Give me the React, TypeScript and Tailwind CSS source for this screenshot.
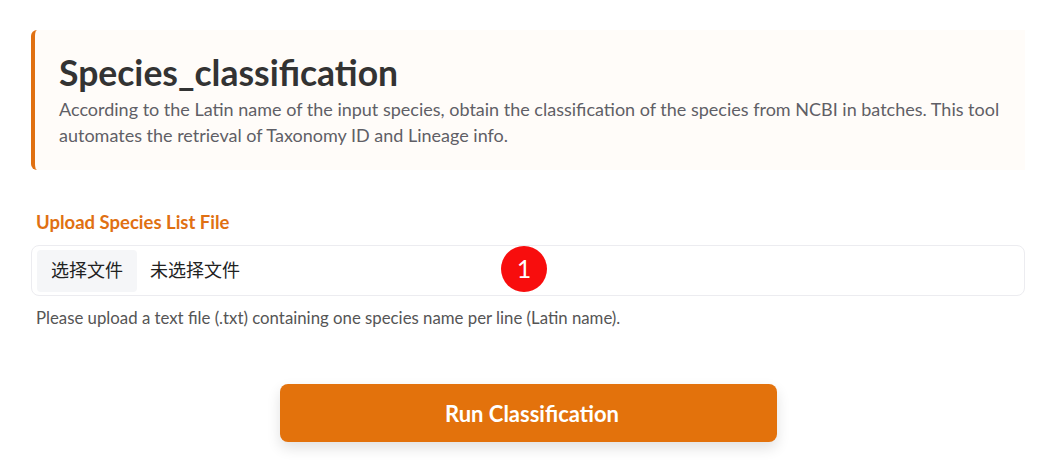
export default function App() {
  return (
    <div
      className="min-h-[475px] w-full bg-white"
      style={{ fontFamily: "Lato, 'Noto Sans CJK SC', sans-serif" }}
    >
      <div className="relative pl-[31px] pr-[33px] pt-[30px] pb-8">
        {/* Header */}
        <div className="rounded-l-md border-l-4 border-[#e07012] bg-[#fffcf9] pl-[24px] pr-6 pt-[21px] pb-[22px]">
          <h1 className="text-[35.5px] font-bold leading-[44px] text-[#333333]">
            Species_classification
          </h1>
          <p className="mt-[1px] text-[18px] leading-[26px] text-[#5f5f66]">
            According to the Latin name of the input species, obtain the
            classification of the species from NCBI in batches. This tool
            automates the retrieval of Taxonomy ID and Lineage info.
          </p>
        </div>

        {/* Upload */}
        <div className="mt-[40px] px-[5px] text-[18.5px] font-bold leading-6 text-[#e07012]">
          Upload Species List File
        </div>
        <div className="mt-[11px] flex h-[51px] items-center rounded-lg border border-[#ececf0] bg-white px-[5px]">
          <div className="flex h-[42px] items-center rounded bg-[#f5f6f8] px-[14px] text-[18px] text-[#222]">
            选择文件
          </div>
          <div className="ml-[13px] text-[18px] text-[#222]">未选择文件</div>
        </div>
        <p className="mt-[12px] px-[5px] text-[16.8px] leading-5 text-[#555]">
          Please upload a text file (.txt) containing one species name per line
          (Latin name).
        </p>

        <div className="mt-[56px] flex justify-center">
          <button className="ml-[0px] h-[58px] w-[497px] rounded-lg bg-[#e3720c] pl-[8px] text-[22px] font-bold text-white shadow-[0_6px_14px_rgba(0,0,0,0.12)]">
            Run Classification
          </button>
        </div>

        {/* annotation marker */}
        <div className="absolute left-[501px] top-[246px] flex h-[46px] w-[46px] items-center justify-center rounded-full bg-[#f80d0d] text-[25px] text-white">
          1
        </div>
      </div>
    </div>
  );
}
